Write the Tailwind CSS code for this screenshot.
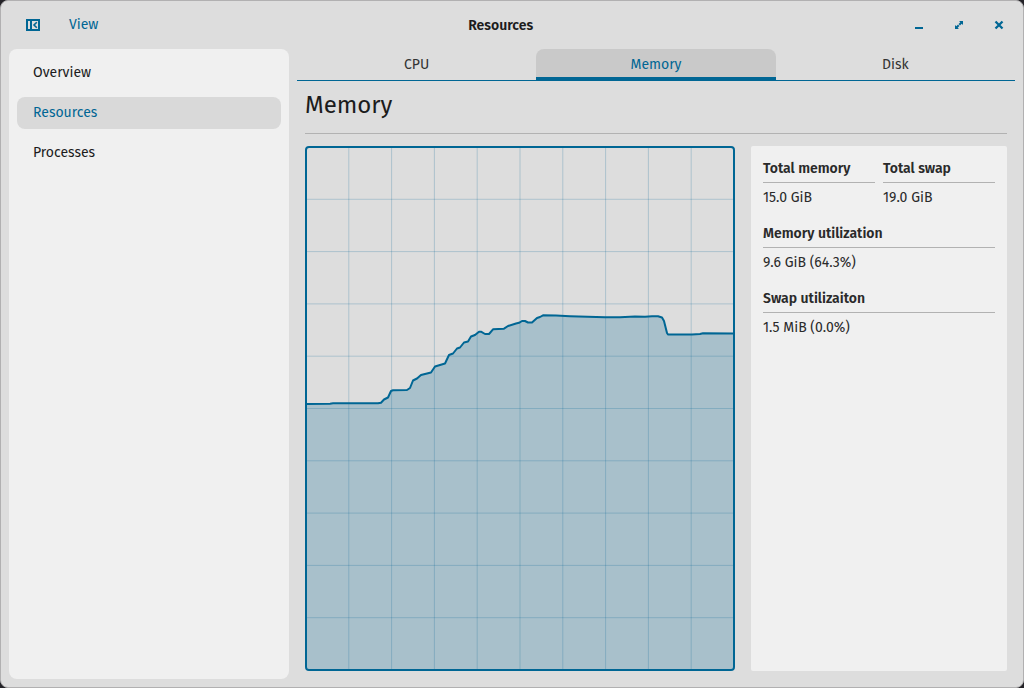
<!DOCTYPE html>
<html lang="en">
<head>
<meta charset="utf-8">
<meta name="viewport" content="width=device-width, initial-scale=1">
<title>Resources</title>
<script src="https://cdn.jsdelivr.net/npm/@tailwindcss/browser@4"></script>
</head>
<body class="bg-[#242328] font-['Fira_Sans','Noto_Sans',sans-serif] text-sm text-[#1c1c1c]">
<div class="flex h-screen flex-col rounded-lg border border-[#b1b0b1] bg-[#dddddd]">
  <header class="flex h-12 shrink-0 items-center px-2">
    <div class="flex items-center">
      <button type="button" aria-label="Toggle sidebar" class="flex h-8 w-12 items-center justify-center text-[#006694]">
        <svg class="h-3 w-3.5" viewBox="0 0 14 12" fill="none" aria-hidden="true">
          <rect x="1" y="1" width="12" height="10" stroke="currentColor" stroke-width="2"/>
          <path d="M5 1v10" stroke="currentColor" stroke-width="2"/>
          <path d="M10.800 3.200L8 6l2.800 2.800" stroke="currentColor" stroke-width="1.600"/>
        </svg>
      </button>
      <button type="button" class="px-3 leading-5 text-[#006694]">View</button>
    </div>
    <h1 class="flex-1 pt-0.5 text-center text-sm font-semibold">Resources</h1>
    <div class="flex justify-end gap-2 pl-3 text-[#006694]">
      <button type="button" aria-label="Minimize" class="flex size-8 items-center justify-center">
        <svg class="size-4" viewBox="0 0 16 16" fill="currentColor" aria-hidden="true"><path d="M4 10h8v2H4z"/></svg>
      </button>
      <button type="button" aria-label="Maximize" class="flex size-8 items-center justify-center">
        <svg class="size-4" viewBox="0 0 16 16" fill="currentColor" aria-hidden="true"><path d="M8 4h4v4L10.700 6.700 9 8.400 7.600 7 9.300 5.300zM4 8l1.300 1.300L7 7.600 8.400 9 6.700 10.700 8 12H4z"/></svg>
      </button>
      <button type="button" aria-label="Close" class="flex size-8 items-center justify-center">
        <svg class="size-4" viewBox="0 0 16 16" fill="none" aria-hidden="true"><path d="M4.500 4.500l7 7M11.500 4.500l-7 7" stroke="currentColor" stroke-width="2.300"/></svg>
      </button>
    </div>
  </header>

  <div class="flex min-h-0 flex-1 gap-2 px-2 pb-2">
    <nav aria-label="Sections" class="flex w-70 shrink-0 flex-col gap-2 rounded-lg bg-[#f0f0f0] p-2">
      <a href="#overview" class="flex h-8 items-center rounded-lg px-4 pb-px">Overview</a>
      <a href="#resources" aria-current="page" class="flex h-8 items-center rounded-lg bg-[#d9d9d9] px-4 pb-px text-[#006694]">Resources</a>
      <a href="#processes" class="flex h-8 items-center rounded-lg px-4 pb-px">Processes</a>
    </nav>

    <main class="flex min-w-0 flex-1 flex-col">
      <div role="tablist" class="grid h-8 shrink-0 grid-cols-3 text-[#333333]">
        <button type="button" role="tab" aria-selected="false" class="border-b border-[#006694]">CPU</button>
        <button type="button" role="tab" aria-selected="true" class="rounded-t-lg border-b-4 border-[#006694] bg-[#c9c9c9] pt-1 text-[#006694]">Memory</button>
        <button type="button" role="tab" aria-selected="false" class="border-b border-[#006694]">Disk</button>
      </div>
      <section role="tabpanel" class="flex min-h-0 flex-1 flex-col px-2 pb-2">
        <h2 class="h-[53px] shrink-0 border-b border-[#b2b2b2] pt-2 text-2xl leading-8">Memory</h2>
        <div class="flex min-h-0 flex-1 gap-4 pt-3">
          <div class="min-w-0 flex-1 overflow-hidden rounded border-2 border-[#006694]">
            <svg class="block h-full w-full" viewBox="1 1 426 521" preserveAspectRatio="none" fill="none" stroke="#006694" role="img" aria-label="Memory use over time">
              <path fill="#006694" fill-opacity=".24" stroke="none" d="M0 257L24 256.700 27 256.300H72L75 255.700 78 252.500 82 250.500 85 244 87 243.300 101 243 104 241 107 233.500 111 231.500 115 228 125 225.500 129 219.500 139 216.500 143 208 147 206.500 151 201.500 154 200.500 158 195.500 162 194.500 165 189.500 169 188 173 184.700H175L179 187H183L187 182.300 198 181.700 202 179 210 176.500 213 175.800 216 174H219L222 175.500H226L231 171 234 170 237 168.300 250 168.500 264 169.200 299 170.200H314L329 169.600 339 169.800 346 169.300H352L356 170.500 358 174 361 186 362 187.500H386L394 187 397 186.200 428 186.500V523H0z"/>
              <path stroke-opacity=".22" vector-effect="non-scaling-stroke" d="M42.800 0V523M85.600 0V523M128.400 0V523M171.200 0V523M214 0V523M256.800 0V523M299.600 0V523M342.400 0V523M385.200 0V523M0 52.300H428M0 104.600H428M0 156.900H428M0 209.200H428M0 261.500H428M0 313.800H428M0 366.100H428M0 418.400H428M0 470.700H428"/>
              <path stroke-width="2" stroke-linejoin="round" vector-effect="non-scaling-stroke" d="M0 257L24 256.700 27 256.300H72L75 255.700 78 252.500 82 250.500 85 244 87 243.300 101 243 104 241 107 233.500 111 231.500 115 228 125 225.500 129 219.500 139 216.500 143 208 147 206.500 151 201.500 154 200.500 158 195.500 162 194.500 165 189.500 169 188 173 184.700H175L179 187H183L187 182.300 198 181.700 202 179 210 176.500 213 175.800 216 174H219L222 175.500H226L231 171 234 170 237 168.300 250 168.500 264 169.200 299 170.200H314L329 169.600 339 169.800 346 169.300H352L356 170.500 358 174 361 186 362 187.500H386L394 187 397 186.200 428 186.500"/>
            </svg>
          </div>
          <dl class="grid w-64 shrink-0 grid-cols-2 content-start gap-x-2 gap-y-3 rounded-xs bg-[#f0f0f0] p-3 text-[#2a2a2a]">
            <div>
              <dt class="border-b border-[#b2b2b2] pb-0.5 leading-[22px] font-semibold">Total memory</dt>
              <dd class="pb-0.5 pt-1 leading-[22px]">15.0 GiB</dd>
            </div>
            <div>
              <dt class="border-b border-[#b2b2b2] pb-0.5 leading-[22px] font-semibold">Total swap</dt>
              <dd class="pb-0.5 pt-1 leading-[22px]">19.0 GiB</dd>
            </div>
            <div class="col-span-2">
              <dt class="border-b border-[#b2b2b2] pb-0.5 leading-[22px] font-semibold">Memory utilization</dt>
              <dd class="pb-0.5 pt-1 leading-[22px]">9.6 GiB (64.3%)</dd>
            </div>
            <div class="col-span-2">
              <dt class="border-b border-[#b2b2b2] pb-0.5 leading-[22px] font-semibold">Swap utilizaiton</dt>
              <dd class="pb-0.5 pt-1 leading-[22px]">1.5 MiB (0.0%)</dd>
            </div>
          </dl>
        </div>
      </section>
    </main>
  </div>
</div>
</body>
</html>
